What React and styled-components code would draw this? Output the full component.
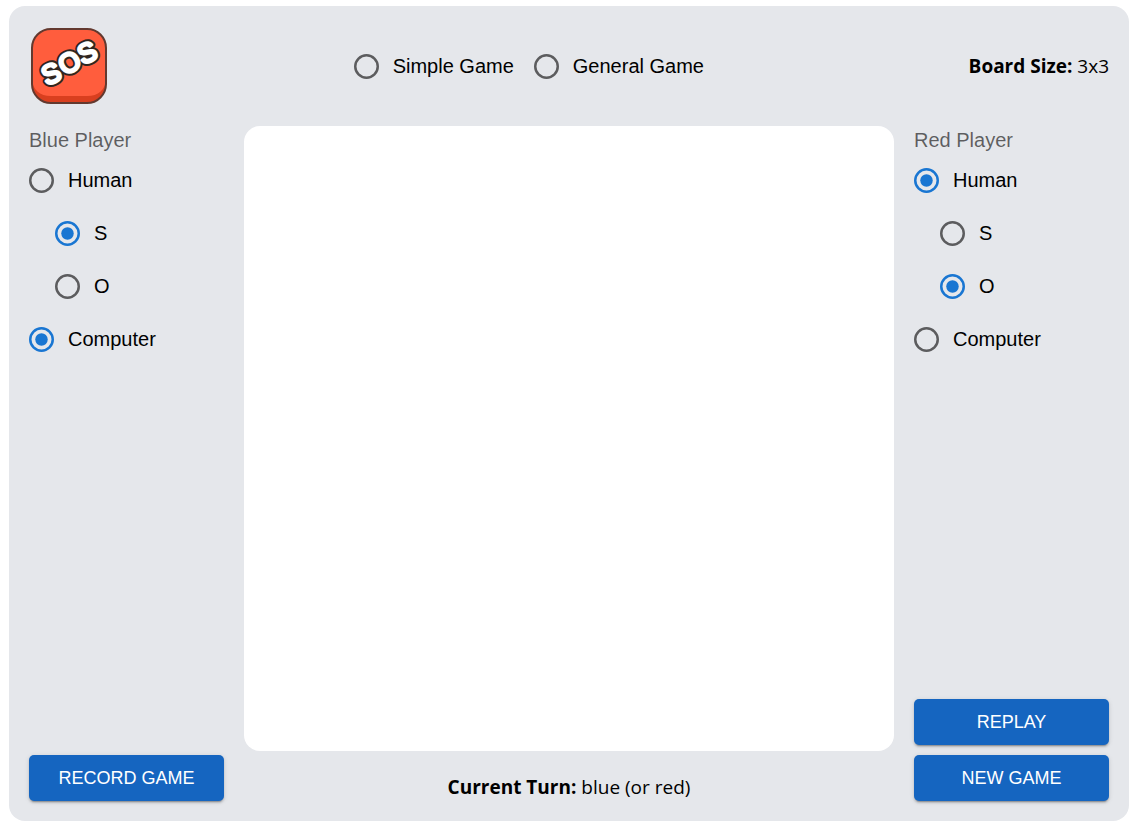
import React, { useState } from "react";
import styled, { createGlobalStyle } from "styled-components";

const GlobalStyle = createGlobalStyle`
  *, *::before, *::after { box-sizing: border-box; }
  body {
    margin: 6px 8px 7px 9px;
    background: #fff;
    color: #000;
    font-family: "Liberation Sans", Arial, sans-serif;
    font-size: 20px;
  }
`;

const Panel = styled.main`
  display: grid;
  grid-template-columns: minmax(0, 3fr) minmax(0, 10fr) minmax(0, 3fr);
  grid-template-rows: 80px 1fr 30px;
  grid-template-areas:
    "header header header"
    "blue board red"
    "blue turn red";
  gap: 20px;
  min-height: calc(100vh - 13px);
  padding: 20px;
  border-radius: 16px;
  background: #e5e7eb;
`;

const Header = styled.header`
  grid-area: header;
  display: flex;
  align-items: center;
  justify-content: space-between;
`;

const Logo = styled.svg`
  width: 80px;
  height: 80px;
`;

const ModeGroup = styled.div`
  display: flex;
`;

const Info = styled.p`
  margin: 0;
  font-family: "Open Sans", "Noto Sans", sans-serif;
  font-size: 19px;
  line-height: 32px;
  white-space: nowrap;
`;

const Turn = styled(Info)`
  grid-area: turn;
  text-align: center;
`;

const Board = styled.section`
  grid-area: board;
  border-radius: 16px;
  background: #fff;
`;

const Side = styled.aside`
  grid-area: ${(p) => p.$area};
  display: flex;
  flex-direction: column;
  justify-content: space-between;
`;

const PlayerSet = styled.fieldset`
  min-width: 0;
  margin: 0;
  padding: 0;
  border: 0;
`;

const PlayerName = styled.legend`
  padding: 0;
  line-height: 28px;
  color: rgba(0, 0, 0, 0.6);
`;

const Letters = styled.div`
  padding-left: 26px;
`;

const RadioLabel = styled.label`
  position: relative;
  display: flex;
  align-items: center;
  gap: 14px;
  height: 53px;
  margin-right: 20px;
  white-space: nowrap;
  cursor: pointer;
`;

const RadioInput = styled.input`
  position: absolute;
  left: 0;
  width: 25px;
  height: 25px;
  margin: 0;
  opacity: 0;
  cursor: inherit;
`;

const RadioIcon = styled.svg`
  width: 25px;
  height: 25px;
  fill: none;
  stroke: rgba(0, 0, 0, 0.6);
  stroke-width: 2;

  circle + circle { display: none; }

  ${RadioInput}:checked + & {
    stroke: #1976d2;
    circle + circle { display: inline; fill: #1976d2; stroke: none; }
  }
  ${RadioInput}:focus-visible + & {
    border-radius: 50%;
    box-shadow: 0 0 0 8px rgba(25, 118, 210, 0.12);
  }
`;

const Actions = styled.div`
  display: flex;
  flex-direction: column;
  gap: 10px;
`;

const Button = styled.button`
  height: 46px;
  padding: 0 16px;
  border: 0;
  border-radius: 5px;
  background: #1565c0;
  color: #fff;
  font-family: inherit;
  font-size: 18px;
  text-transform: uppercase;
  white-space: nowrap;
  box-shadow: 0 3px 1px -2px rgba(0, 0, 0, 0.2), 0 2px 2px 0 rgba(0, 0, 0, 0.14),
    0 1px 5px 0 rgba(0, 0, 0, 0.12);
  cursor: pointer;
`;

function Radio({ name, value, selected, onSelect, children }) {
  return (
    <RadioLabel>
      <RadioInput
        type="radio"
        name={name}
        value={value}
        checked={selected === value}
        onChange={() => onSelect(value)}
      />
      <RadioIcon viewBox="2 2 20 20" aria-hidden="true">
        <circle cx="12" cy="12" r="9" />
        <circle cx="12" cy="12" r="5" />
      </RadioIcon>
      {children}
    </RadioLabel>
  );
}

function Player({ id, title, initialType, initialLetter }) {
  const [type, setType] = useState(initialType);
  const [letter, setLetter] = useState(initialLetter);
  return (
    <PlayerSet>
      <PlayerName>{title}</PlayerName>
      <Radio name={`${id}-type`} value="human" selected={type} onSelect={setType}>Human</Radio>
      <Letters role="radiogroup" aria-label={`${title} letter`}>
        <Radio name={`${id}-letter`} value="S" selected={letter} onSelect={setLetter}>S</Radio>
        <Radio name={`${id}-letter`} value="O" selected={letter} onSelect={setLetter}>O</Radio>
      </Letters>
      <Radio name={`${id}-type`} value="computer" selected={type} onSelect={setType}>Computer</Radio>
    </PlayerSet>
  );
}

const LOGO_LETTERS = [
  { char: "S", x: 22, y: 47, turn: -24 },
  { char: "O", x: 40, y: 36, turn: -28 },
  { char: "S", x: 58, y: 26, turn: -24 },
];

function SosLogo() {
  const layer = (stroke, width) =>
    LOGO_LETTERS.map(({ char, x, y, turn }) => (
      <text
        key={`${stroke}${x}`}
        transform={`translate(${x} ${y}) rotate(${turn})`}
        y="10"
        textAnchor="middle"
        fontFamily="Liberation Sans, Arial, sans-serif"
        fontWeight="400"
        fontSize="27"
        fill="#fff"
        stroke={stroke}
        strokeWidth={width}
        strokeLinejoin="round"
      >
        {char}
      </text>
    ));
  return (
    <Logo viewBox="0 0 80 80" role="img" aria-label="SOS">
      <rect x="3" y="3" width="74" height="74" rx="19" fill="#d93f1f" />
      <path d="M3 22a19 19 0 0 1 19-19h36a19 19 0 0 1 19 19v30c0 12-8 18-19 18H22C11 70 3 64 3 52z" fill="#ff5d3d" />
      <rect x="3" y="3" width="74" height="74" rx="19" fill="none" stroke="#63392f" strokeWidth="2" />
      <g aria-hidden="true">
        {layer("#30251f", 7)}
        {layer("#fff", 3)}
      </g>
    </Logo>
  );
}

export default function App() {
  const [mode, setMode] = useState("");
  return (
    <>
      <GlobalStyle />
      <Panel>
        <Header>
          <SosLogo />
          <ModeGroup role="radiogroup" aria-label="Game mode">
            <Radio name="mode" value="simple" selected={mode} onSelect={setMode}>Simple Game</Radio>
            <Radio name="mode" value="general" selected={mode} onSelect={setMode}>General Game</Radio>
          </ModeGroup>
          <Info><strong>Board Size:</strong> 3x3</Info>
        </Header>
        <Side $area="blue">
          <Player id="blue" title="Blue Player" initialType="computer" initialLetter="S" />
          <Actions>
            <Button type="button">Record Game</Button>
          </Actions>
        </Side>
        <Board aria-label="Game board" />
        <Side $area="red">
          <Player id="red" title="Red Player" initialType="human" initialLetter="O" />
          <Actions>
            <Button type="button">Replay</Button>
            <Button type="button">New Game</Button>
          </Actions>
        </Side>
        <Turn><strong>Current Turn:</strong> blue (or red)</Turn>
      </Panel>
    </>
  );
}
